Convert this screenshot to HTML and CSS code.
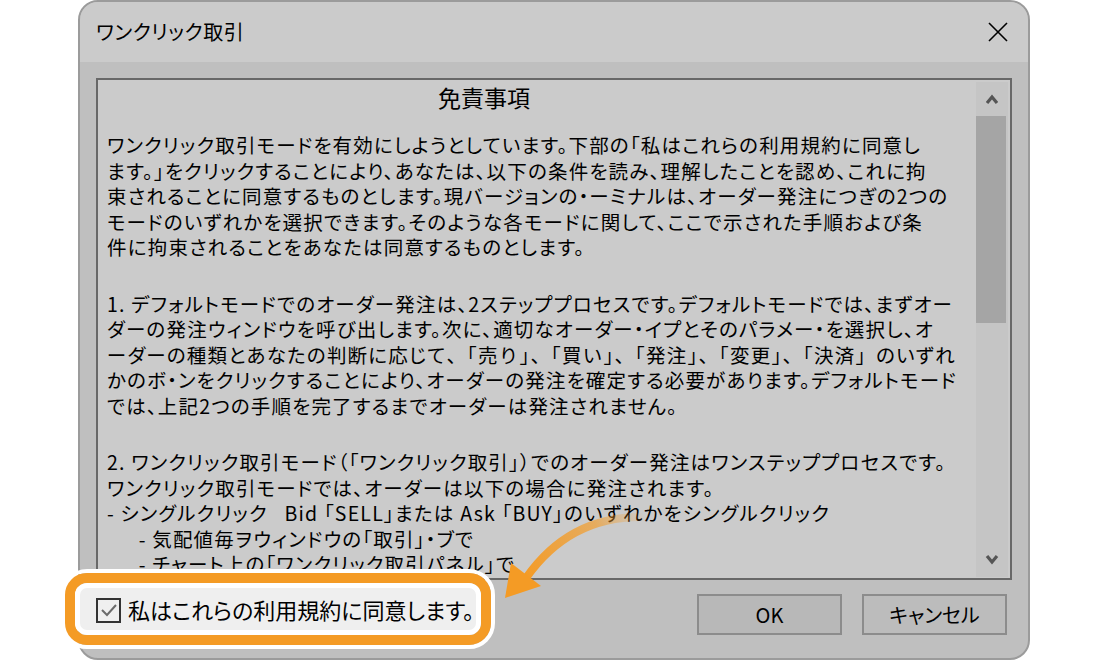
FILE: index.html
```html
<!DOCTYPE html>
<html lang="ja">
<head>
<meta charset="utf-8">
<title>ワンクリック取引</title>
<link rel="stylesheet" href="styles.css">
</head>
<body>
<div class="dialog">
  <div class="titlebar">
    <span class="title">ワンクリック取引</span>
    <svg class="close" width="20" height="20" viewBox="0 0 20 20"><path d="M1 1 L19 19 M19 1 L1 19" stroke="#000" stroke-width="1.6" fill="none"/></svg>
  </div>
  <div class="dbody">
    <div class="textbox">
      <div class="content">
        <div class="heading">免責事項</div>
        <p class="para">ワンクリック取引モードを有効にしようとしています。下部の「私はこれらの利用規約に同意し<br>ます。」をクリックすることにより、あなたは、以下の条件を読み、理解したことを認め、これに拘<br>束されることに同意するものとします。現バージョンの・ーミナルは、オーダー発注につぎの2つの<br>モードのいずれかを選択できます。そのような各モードに関して、ここで示された手順および条<br>件に拘束されることをあなたは同意するものとします。</p>
        <p class="para">1. デフォルトモードでのオーダー発注は、2ステッププロセスです。デフォルトモードでは、まずオー<br>ダーの発注ウィンドウを呼び出します。次に、適切なオーダー・イプとそのパラメー・を選択し、オ<br>ーダーの種類とあなたの判断に応じて<span class="fw">、「売り」、「買い」、「発注」、「変更」、「決済」</span>のいずれ<br>かのボ・ンをクリックすることにより、オーダーの発注を確定する必要があります。デフォルトモード<br>では、上記2つの手順を完了するまでオーダーは発注されません。</p>
        <p class="para">2. ワンクリック取引モード（「ワンクリック取引」）でのオーダー発注はワンステッププロセスです。<br>ワンクリック取引モードでは、オーダーは以下の場合に発注されます。<br>- シングルクリック&nbsp;&nbsp;&nbsp;Bid 「SELL」または Ask 「BUY」のいずれかをシングルクリック<br>&emsp;&ensp;- 気配値毎ヲウィンドウの「取引」・ブで<br>&emsp;&ensp;- チャート上の「ワンクリック取引パネル」で</p>
      </div>
      <div class="scrollbar">
        <div class="sb-btn"><svg width="14" height="12" viewBox="0 0 14 12"><path d="M2 10 L7 4 L12 10" stroke="#555" stroke-width="3.2" fill="none"/></svg></div>
        <div class="thumb"></div>
        <div class="track"></div>
        <div class="sb-btn"><svg width="14" height="12" viewBox="0 0 14 12"><path d="M2 2 L7 8 L12 2" stroke="#555" stroke-width="3.2" fill="none"/></svg></div>
      </div>
    </div>
    <div class="footer">
      <div class="buttons">
        <div class="btn ok">OK</div>
        <div class="btn">キャンセル</div>
      </div>
    </div>
  </div>
</div>

<div class="callout">
  <div class="ring">
    <div class="inner">
      <span class="checkbox"><svg width="20" height="20" viewBox="0 0 20 20"><path d="M3 10 L8 15 L17 5" stroke="#6b6b6b" stroke-width="2" fill="none"/></svg></span>
      <span class="agree">私はこれらの利用規約に同意します。</span>
    </div>
  </div>
</div>

<svg class="arrow" width="170" height="120" viewBox="0 0 170 120">
  <defs>
    <linearGradient id="g" x1="155" y1="15" x2="35" y2="80" gradientUnits="userSpaceOnUse">
      <stop offset="0" stop-color="#f49b25" stop-opacity="0"/>
      <stop offset="0.35" stop-color="#f49b25" stop-opacity="0.65"/>
      <stop offset="1" stop-color="#f49b25" stop-opacity="1"/>
    </linearGradient>
  </defs>
  <path d="M155 17 Q 80 15 36 78" stroke="url(#g)" stroke-width="8" fill="none"/>
  <path d="M15 98 L21 63 L51 86 Z" fill="#f49b25"/>
</svg>
</body>
</html>
```
FILE: styles.css
```css
html, body {
  margin: 0;
  padding: 0;
  background: #ffffff;
}
body {
  width: 1100px;
  height: 662px;
  position: relative;
  overflow: hidden;
  font-family: "Noto Sans CJK JP", "Noto Sans", sans-serif;
  color: #000;
}
.dialog {
  margin-left: 78px;
  width: 952px;
  height: 660px;
  box-sizing: border-box;
  border: 2px solid #9b9b9b;
  border-radius: 20px;
  overflow: hidden;
  display: flex;
  flex-direction: column;
  background: #bfbfbf;
}
.titlebar {
  height: 60px;
  flex: none;
  background: #cbcbcb;
  display: flex;
  align-items: center;
  justify-content: space-between;
  padding: 0 20px 0 16px;
}
.title {
  font-size: 20px;
  letter-spacing: 0.6px;
  font-feature-settings: "palt";
  margin-top: -2px;
}
.close {
  margin-top: -1px;
}
.dbody {
  flex: 1;
  display: flex;
  flex-direction: column;
  padding: 16px 16px 0 16px;
}
.textbox {
  height: 502px;
  box-sizing: border-box;
  border: 2px solid #686868;
  background: #cbcbcb;
  display: flex;
  overflow: hidden;
}
.content {
  flex: 1;
  overflow: hidden;
  padding: 2px 0 0 9px;
  font-size: 19.5px;
  line-height: 25.5px;
  letter-spacing: 1.2px;
  font-feature-settings: "palt";
  white-space: nowrap;
}
.fw {
  font-feature-settings: normal;
}
.heading {
  font-size: 23px;
  line-height: 30px;
  letter-spacing: 0;
  padding-left: 331px;
  margin-bottom: 20px;
}
.para {
  margin: 0 0 31px 0;
}
.scrollbar {
  width: 32px;
  flex: none;
  margin: 2px 2px 1px 0;
  display: flex;
  flex-direction: column;
  background: #c5c5c5;
}
.sb-btn {
  height: 34px;
  flex: none;
  display: flex;
  align-items: center;
  justify-content: center;
}
.thumb {
  height: 207px;
  width: 30px;
  flex: none;
  background: #a5a5a5;
}
.track {
  flex: 1;
}
.footer {
  flex: 1;
  display: flex;
  justify-content: flex-end;
  padding-top: 14px;
}
.buttons {
  display: flex;
  gap: 20px;
  margin-right: 5px;
  align-items: flex-start;
}
.btn {
  width: 145px;
  height: 41px;
  box-sizing: border-box;
  border: 2px solid #8c8c8c;
  background: #bcbcbc;
  display: flex;
  align-items: center;
  justify-content: center;
  font-size: 20px;
  font-feature-settings: "palt";
}
.btn.ok {
  background: #b8b8b8;
}
.callout {
  position: absolute;
  left: 61px;
  top: 569px;
  border: 4px solid #ffffff;
  border-radius: 26px;
}
.ring {
  border: 10px solid #f49b25;
  border-radius: 22px;
}
.inner {
  width: 406px;
  height: 52px;
  box-sizing: border-box;
  border: 5px solid #ffffff;
  border-radius: 12px;
  background: #efefef;
  display: flex;
  align-items: center;
  padding-left: 16px;
  gap: 7px;
}
.checkbox {
  width: 25px;
  height: 25px;
  box-sizing: border-box;
  border: 2px solid #333;
  display: flex;
  align-items: center;
  justify-content: center;
  margin-top: 2px;
}
.agree {
  font-size: 22px;
  font-feature-settings: "palt";
}
.arrow {
  position: absolute;
  left: 490px;
  top: 500px;
}
```
